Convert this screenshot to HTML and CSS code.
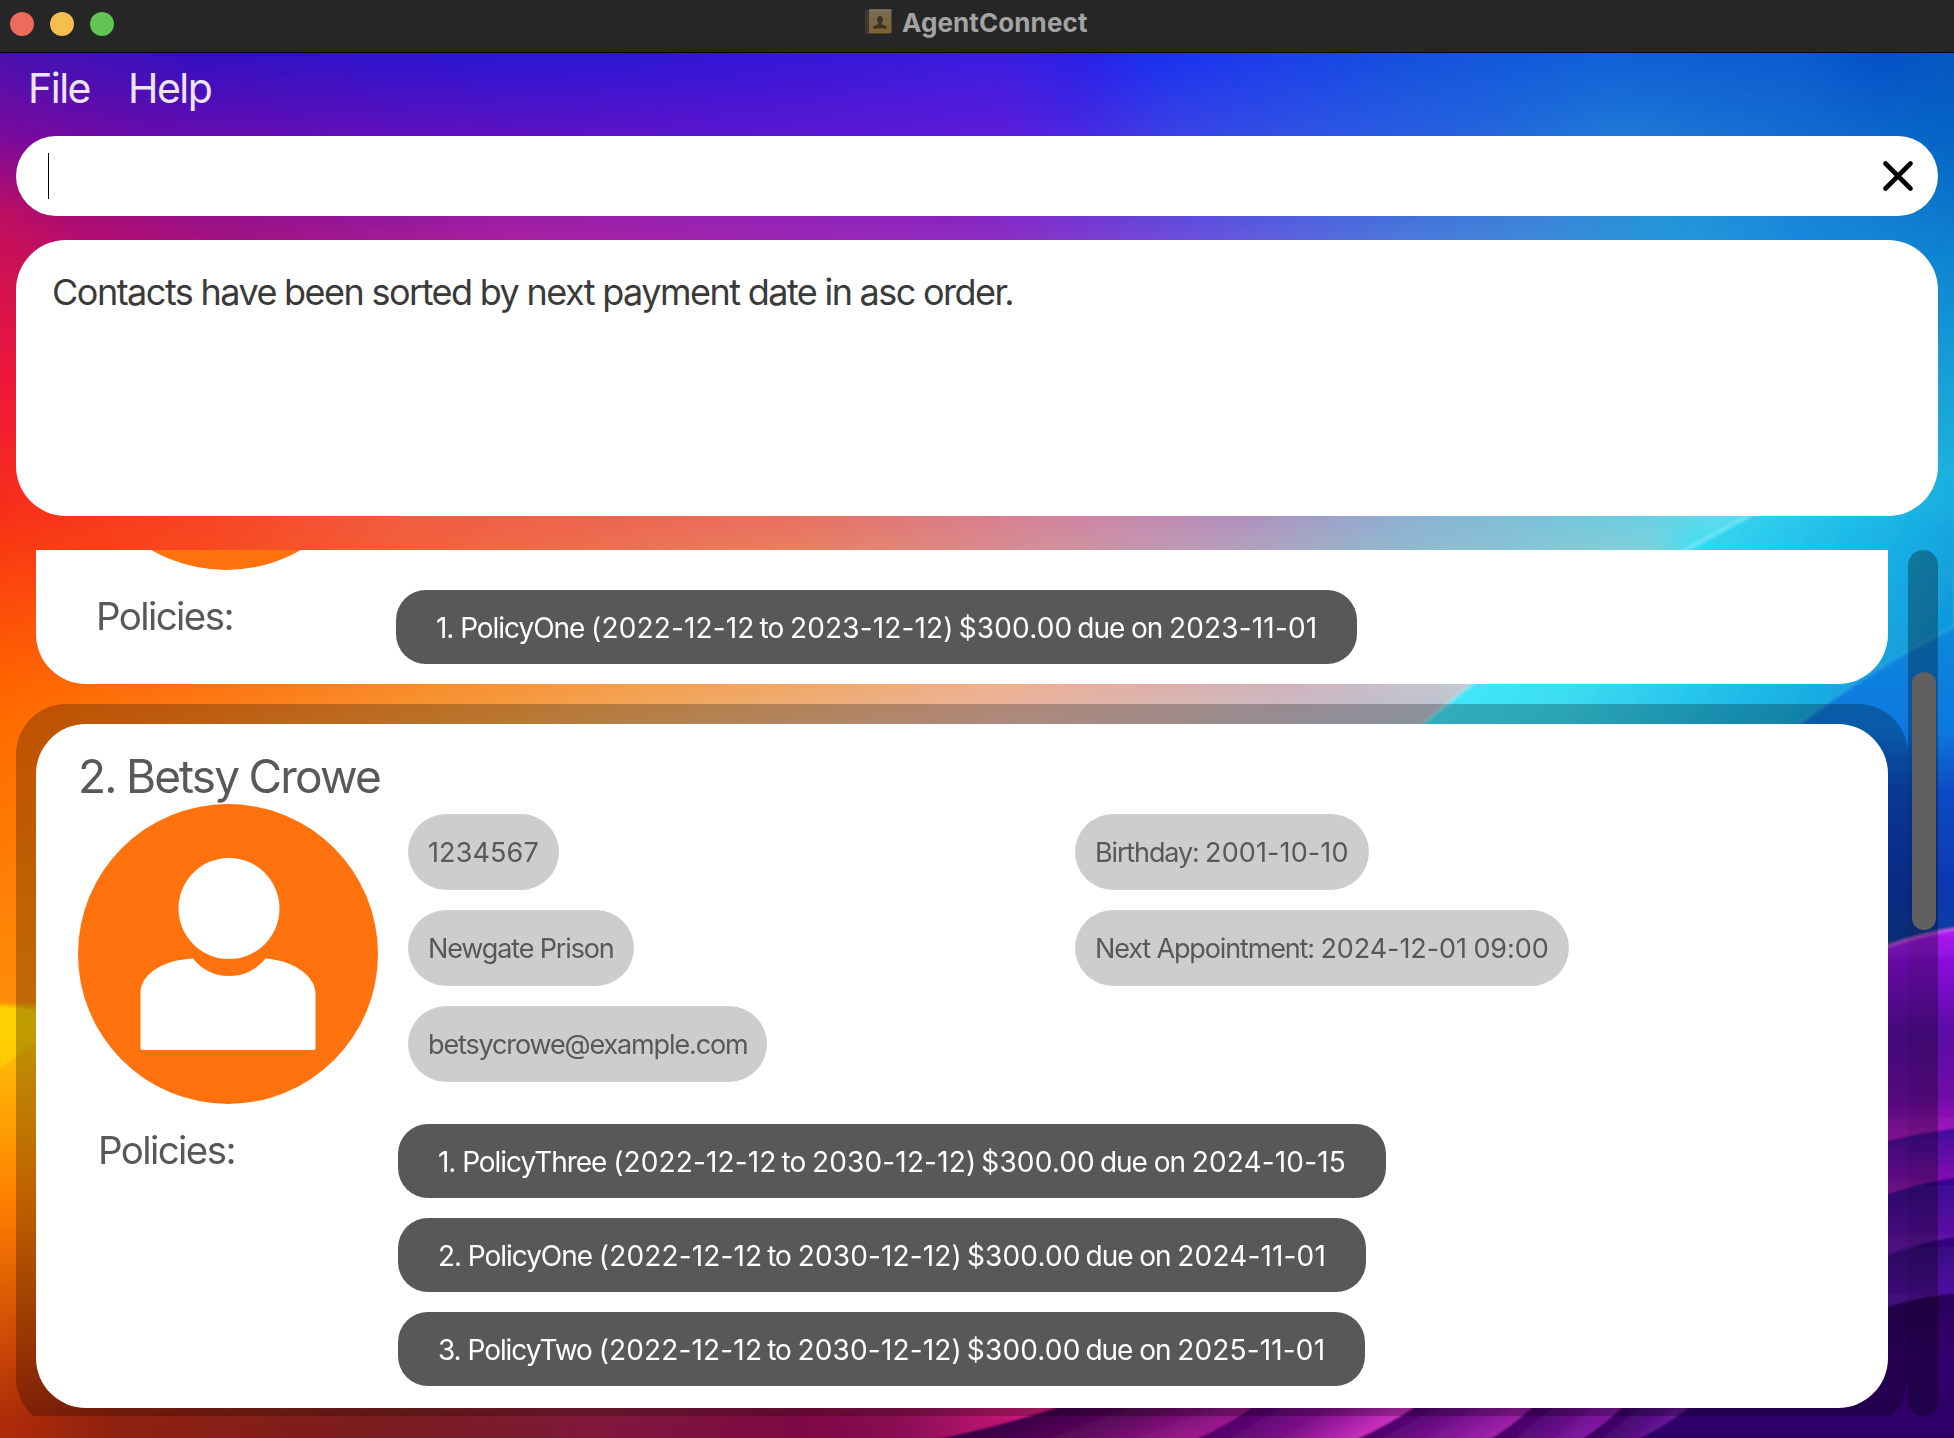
FILE: index.html
```html
<!DOCTYPE html>
<html lang="en">
<head>
<meta charset="utf-8">
<title>AgentConnect</title>
<link rel="stylesheet" href="styles.css">
</head>
<body>
<div class="window">
  <div class="wallpaper" aria-hidden="true">
    <div class="band b1"></div><div class="band b2"></div><div class="band b3"></div><div class="band b4"></div>
    <div class="band b5"></div><div class="band b6"></div><div class="band b7"></div><div class="band b8"></div>
    <div class="band b9"></div><div class="band b10"></div><div class="band b11"></div><div class="band b12"></div>
    <div class="band b13"></div>
    <svg class="waves" viewBox="0 0 1954 1438">
      <defs>
        <linearGradient id="cyan" gradientUnits="userSpaceOnUse" x1="1560" y1="540" x2="1960" y2="790">
          <stop offset="0" stop-color="#42e6f8"/><stop offset=".2" stop-color="#3adcf2"/><stop offset=".5" stop-color="#1fbce8"/><stop offset=".75" stop-color="#129fdc"/><stop offset="1" stop-color="#0c70d4"/>
        </linearGradient>
        <linearGradient id="cyanFade" gradientUnits="userSpaceOnUse" x1="0" y1="440" x2="0" y2="530">
          <stop offset="0" stop-color="#fff" stop-opacity="0"/><stop offset="1" stop-color="#fff"/>
        </linearGradient>
        <mask id="cyanMask"><rect width="1954" height="1438" fill="url(#cyanFade)"/></mask>
        <linearGradient id="blue" gradientUnits="userSpaceOnUse" x1="0" y1="640" x2="0" y2="940">
          <stop offset="0" stop-color="#0c86dc"/><stop offset=".3" stop-color="#1078e0"/><stop offset=".5" stop-color="#0b4cc4"/><stop offset=".8" stop-color="#1038b4"/><stop offset="1" stop-color="#0a3ca0"/>
        </linearGradient>
        <linearGradient id="v1" gradientUnits="userSpaceOnUse" x1="0" y1="930" x2="0" y2="1140">
          <stop offset="0" stop-color="#b01cf0"/><stop offset=".15" stop-color="#8a10dc"/><stop offset=".5" stop-color="#5a08a4"/><stop offset=".8" stop-color="#700ca8"/><stop offset="1" stop-color="#b018c4"/>
        </linearGradient>
        <linearGradient id="v2" gradientUnits="userSpaceOnUse" x1="0" y1="1128" x2="0" y2="1192">
          <stop offset="0" stop-color="#40089c"/><stop offset="1" stop-color="#9414b4"/>
        </linearGradient>
        <linearGradient id="v3" gradientUnits="userSpaceOnUse" x1="0" y1="1178" x2="0" y2="1254">
          <stop offset="0" stop-color="#360590"/><stop offset="1" stop-color="#6c16ac"/>
        </linearGradient>
        <linearGradient id="v4" gradientUnits="userSpaceOnUse" x1="0" y1="1240" x2="0" y2="1306">
          <stop offset="0" stop-color="#34057c"/><stop offset="1" stop-color="#5814a8"/>
        </linearGradient>
        <linearGradient id="v5" gradientUnits="userSpaceOnUse" x1="0" y1="1294" x2="0" y2="1438">
          <stop offset="0" stop-color="#2a0058"/><stop offset=".4" stop-color="#34006c"/><stop offset="1" stop-color="#2c0066"/>
        </linearGradient>
        <linearGradient id="f1" gradientUnits="userSpaceOnUse" x1="1003" y1="1421" x2="1032" y2="1496">
          <stop offset="0" stop-color="#340044"/><stop offset=".5" stop-color="#5c085c"/><stop offset="1" stop-color="#98188c"/>
        </linearGradient>
        <linearGradient id="f2" gradientUnits="userSpaceOnUse" x1="1226" y1="1421" x2="1270" y2="1494">
          <stop offset="0" stop-color="#4c0068"/><stop offset=".5" stop-color="#7c1088"/><stop offset="1" stop-color="#cc30c0"/>
        </linearGradient>
        <linearGradient id="f3" gradientUnits="userSpaceOnUse" x1="1388" y1="1421" x2="1418" y2="1474">
          <stop offset="0" stop-color="#480068"/><stop offset="1" stop-color="#9c20a8"/>
        </linearGradient>
        <linearGradient id="f4" gradientUnits="userSpaceOnUse" x1="1513" y1="1421" x2="1547" y2="1464">
          <stop offset="0" stop-color="#400064"/><stop offset="1" stop-color="#8018a0"/>
        </linearGradient>
        <linearGradient id="f5" gradientUnits="userSpaceOnUse" x1="1604" y1="1421" x2="1628" y2="1451">
          <stop offset="0" stop-color="#34005c"/><stop offset="1" stop-color="#641494"/>
        </linearGradient>
        <filter id="soft" x="-5%" y="-5%" width="110%" height="110%"><feGaussianBlur stdDeviation="1.2"/></filter>
      </defs>
      <g filter="url(#soft)">
        <path mask="url(#cyanMask)" fill="url(#cyan)" d="M1960 420L1752 514Q1590 600 1472 684L1420 726V760H1960Z"/>
        <path d="M1752 514Q1590 600 1472 684L1420 726" fill="none" stroke="#a8f4f4" stroke-width="5" opacity=".35"/>
        <path fill="url(#blue)" d="M1960 624Q1870 668 1800 724V960H1960Z"/>
        <path d="M1960 624Q1870 668 1800 724" fill="none" stroke="#3cb0e8" stroke-width="5" opacity=".3"/>
        <path fill="url(#v1)" d="M1880 949Q1920 934 1960 928V1150H1880Z"/>
        <path d="M1880 949Q1920 934 1960 928" fill="none" stroke="#d060f0" stroke-width="3" opacity=".8"/>
        <path fill="url(#v2)" d="M1880 1143Q1920 1132 1960 1128V1210H1880Z"/>
        <path fill="url(#v3)" d="M1880 1197Q1920 1182 1960 1177V1270H1880Z"/>
        <path fill="url(#v4)" d="M1880 1258Q1920 1242 1960 1236V1320H1880Z"/>
        <path fill="url(#v5)" d="M1800 1360H1880V1309Q1920 1296 1960 1293V1450H1800Z"/>
        <path fill="url(#f1)" d="M1080 1400Q1010 1425 925 1442H1300V1400Z"/>
        <path fill="url(#f2)" d="M1262 1400Q1230 1425 1190 1442H1440V1400Z"/>
        <path fill="url(#f3)" d="M1425 1400Q1390 1425 1350 1442H1560V1400Z"/>
        <path fill="url(#f4)" d="M1540 1400Q1515 1425 1486 1442H1640V1400Z"/>
        <path fill="url(#f5)" d="M1630 1400Q1605 1425 1578 1442H1720V1400Z"/>
        <path fill="url(#v5)" d="M1698 1400Q1670 1425 1632 1442H1900V1400Z"/>
        <path fill="#ffd808" opacity=".6" d="M0 1004Q20 1009 60 1014V1030Q20 1050 0 1070Z"/>
      </g>
    </svg>
  </div>

  <header class="titlebar">
    <div class="lights"><i class="light red"></i><i class="light amber"></i><i class="light green"></i></div>
    <div class="title">
      <svg class="app-icon" viewBox="0 0 27 25">
        <defs><linearGradient id="book" x1="0" y1="0" x2="0" y2="1"><stop offset="0" stop-color="#7a6c56"/><stop offset="1" stop-color="#7c6030"/></linearGradient></defs>
        <rect x="0" y="1" width="5" height="24" fill="#3c3836"/>
        <rect x="4" y=".5" width="22.500" height="24" rx="1" fill="url(#book)"/>
        <rect x="4" y=".5" width="22.500" height="1" fill="#8a8070"/>
        <path fill="#3c3426" d="M15 7c2 0 3.200 1.500 3 3.700-.1 1.500-.7 2.300-1.200 3v1.500c1.500 1 5.200 1 5.200 4.300H8c0-3.300 3.700-3.300 5.200-4.300v-1.500c-.5-.7-1.100-1.500-1.200-3C11.800 8.500 13 7 15 7z"/>
      </svg>
      <span class="title-text">AgentConnect</span>
    </div>
  </header>

  <nav class="menubar"><span>File</span><span>Help</span></nav>

  <div class="command">
    <i class="caret"></i>
    <svg class="clear" viewBox="0 0 32 32"><path d="M3.500 3.500l25 25M28.500 3.500l-25 25" stroke="#000" stroke-width="4.600" stroke-linecap="round"/></svg>
  </div>

  <section class="result">Contacts have been sorted by next payment date in asc order.</section>

  <main class="list">
    <div class="cells">
      <article class="cell first">
        <div class="card">
          <div class="avatar-slot"><div class="avatar-tail"></div></div>
          <div class="policies">
            <span class="label">Policies:</span>
            <div class="policy-list">
              <span class="policy"><b>1. PolicyOne </b>(2022-12-12 <b>to </b>2023-12-12) $300.00 <b>due on </b>2023-11-01</span>
            </div>
          </div>
        </div>
      </article>
      <article class="cell selected">
        <div class="card">
          <h2 class="name">2. Betsy Crowe</h2>
          <div class="details">
            <svg class="avatar" viewBox="0 0 300 300">
              <circle cx="150" cy="150" r="150" fill="#ff720d"/>
              <circle cx="151" cy="104.500" r="50.500" fill="#fff"/>
              <path fill="#fff" d="M115 154.500C85 156 62.500 170 62.500 189V244q0 2 2 2H235.500q2 0 2-2V189C237.500 172 215 156 187.500 154.500C178 166 166 172 151 172S124 166 115 154.500Z"/>
            </svg>
            <div class="column left">
              <span class="chip">1234567</span><span class="chip"><b>Newgate Prison</b></span><span class="chip"><b>betsycrowe@example.com</b></span>
            </div>
            <div class="column">
              <span class="chip"><b>Birthday: </b>2001-10-10</span><span class="chip appointment"><b>Next Appointment: </b>2024-12-01<b> </b>09:00</span>
            </div>
          </div>
          <div class="policies">
            <span class="label">Policies:</span>
            <div class="policy-list">
              <span class="policy"><b>1. PolicyThree </b>(2022-12-12 <b>to </b>2030-12-12) $300.00 <b>due on </b>2024-10-15</span>
              <span class="policy"><b>2. PolicyOne </b>(2022-12-12 <b>to </b>2030-12-12) $300.00 <b>due on </b>2024-11-01</span>
              <span class="policy"><b>3. PolicyTwo </b>(2022-12-12 <b>to </b>2030-12-12) $300.00 <b>due on </b>2025-11-01</span>
            </div>
          </div>
        </div>
      </article>
    </div>
    <div class="scrollbar"><div class="thumb"></div></div>
  </main>
</div>
</body>
</html>
```

FILE: styles.css
```css
* { box-sizing: border-box; }

body {
  margin: 0;
  background: #262626;
  font-family: Inter, "Liberation Sans", sans-serif;
}

.window {
  position: relative;
  width: 1954px;
  height: 1438px;
  overflow: hidden;
  display: flex;
  flex-direction: column;
}

/* Wallpaper: each band fades in over the one above it */
.wallpaper {
  position: absolute;
  inset: 53px 0 0;
  overflow: hidden;
}
.band {
  position: absolute;
  inset: calc(var(--from) - 53px) 0 0;
  -webkit-mask-image: linear-gradient(transparent, #000 var(--fade));
  mask-image: linear-gradient(transparent, #000 var(--fade));
}
.b1 { --from: 53px; --fade: 0px; background: linear-gradient(90deg, #4a12b0, #3410c2 200px, #2a17d4 500px, #3518d8 800px, #3a1de0 1000px, #2a20e6 1080px, #1a30f0 1150px, #1c3cec 1250px, #1450de 1400px, #1060d8 1600px, #0c5cd0 1800px, #0550c8 1880px, #0858c0); }
.b2 { --from: 53px; --fade: 83px; background: linear-gradient(90deg, #7a0a9c, #660cab 150px, #6010bc 400px, #5a14cc 700px, #5e1cd8 1000px, #4a28e0 1080px, #3a44e4 1180px, #2c58e4 1350px, #2468dc 1500px, #1f7ad6 1620px, #146cd0 1800px, #0464c4); }
.b3 { --from: 136px; --fade: 80px; background: linear-gradient(90deg, #c01060, #ac0c72 60px, #981088 200px, #9018a0 400px, #9a1ea6 500px, #9622b2 700px, #8a22c0 950px, #7a30d0 1050px, #5a4ee0 1200px, #4470dc 1400px, #3a84d8 1550px, #2496d8 1660px, #1a86dc 1800px, #0c78cc); }
.b4 { --from: 216px; --fade: 24px; background: linear-gradient(90deg, #c81058, #b40e70 80px, #a01484 250px, #aa20a0 500px, #a024ac 700px, #8e2ec4 1000px, #6a52dc 1200px, #4e78dc 1400px, #3c8ad8 1550px, #2298dc 1680px, #1888dc 1800px, #0c80d0); }
.b5 { --from: 240px; --fade: 140px; background: linear-gradient(90deg, #ec1838, #d04880 800px, #18a0d8); }
.b6 { --from: 380px; --fade: 136px; background: linear-gradient(90deg, #f83018, #f84424 200px, #f25c40 400px, #ee6450 600px, #ea7064 800px, #d88090 1000px, #cc86a8 1100px, #b090c0 1250px, #90b0d0 1400px, #70cadc 1600px, #60dcec 1720px, #28c4ea 1850px, #20b8e0); }
.b7 { --from: 516px; --fade: 34px; background: linear-gradient(90deg, #fa3c10, #f84820 200px, #f26038 400px, #ec7050 600px, #e88060 800px, #d88c90 1000px, #bc9cb8 1200px, #90b8d0 1400px, #80d0dc 1650px, #38e0f4 1700px, #28c8ea 1850px, #14a8e0); }
.b8 { --from: 550px; --fade: 134px; background: linear-gradient(90deg, #ff6400, #fe7210 200px, #f88a28 400px, #f49c48 600px, #f0a868 800px, #eeb090 1000px, #e0b0a8 1150px, #d0b4c0 1300px, #c4c8d0 1450px); }
.b9 { --from: 684px; --fade: 40px; background: linear-gradient(90deg, #ff6c00, #fe8018 200px, #f8a040 500px, #f0b070 700px, #e8b8a8 1000px, #b8c0d0 1400px); }
.b10 { --from: 724px; --fade: 270px; background: linear-gradient(90deg, #ff8c08, #f88800); }
.b11 { --from: 1002px; --fade: 8px; background: linear-gradient(90deg, #ffc808, #ffd008); }
.b12 { --from: 1020px; --fade: 180px; background: linear-gradient(90deg, #ff8000, #ff8c00); }
.b13 { --from: 1200px; --fade: 220px; background: linear-gradient(90deg, #b02c08, #8e2010 120px, #781c20 400px, #80183c 600px, #7c0844 800px, #8a0c54 900px, #d01880 1040px, #7c1088); }
.waves { position: absolute; left: 0; top: -53px; width: 1954px; height: 1438px; }

/* Title bar */
.titlebar {
  position: relative;
  height: 53px;
  flex: none;
  display: grid;
  grid-template-columns: 865px 1fr;
  background: #262626;
  border-bottom: 1px solid #000;
}
.lights { display: flex; gap: 16px; padding: 12px 10px; }
.light { width: 24px; height: 24px; border-radius: 50%; }
.red { background: #ed6a5f; }
.amber { background: #f5bf4f; }
.green { background: #61c554; }
.title { display: flex; gap: 10px; padding-top: 9px; }
.app-icon { width: 27px; height: 25px; }
.title-text { font-size: 26px; font-weight: 700; line-height: 28px; letter-spacing: .1px; color: #a3a3a3; }

/* Menu */
.menubar {
  position: relative;
  flex: none;
  height: 83px;
  padding: 10px 28px;
  display: flex;
  gap: 38px;
  font-size: 41px;
  line-height: 50px;
  letter-spacing: -1.5px;
  color: #ece4f8;
}

/* Command box */
.command {
  position: relative;
  flex: none;
  height: 80px;
  margin: 0 16px 24px;
  padding: 0 24px 0 32px;
  border-radius: 40px;
  background: #fff;
  display: flex;
  align-items: center;
  justify-content: space-between;
}
.caret { width: 1px; height: 46px; background: #000; }
.clear { width: 32px; height: 32px; }

/* Result box */
.result {
  position: relative;
  flex: none;
  height: 276px;
  margin: 0 16px 34px;
  padding: 30px 36px;
  border-radius: 50px;
  background: #fff;
  font-size: 36px;
  line-height: 44px;
  letter-spacing: -1.5px;
  word-spacing: -.5px;
  color: #3a3a3a;
}

/* Contact list */
.list {
  position: relative;
  flex: none;
  height: 866px;
  margin: 0 16px;
  display: flex;
  overflow: hidden;
}
.cells { width: 1892px; }
.cell { padding: 20px; border-radius: 50px; }
.cell.first { height: 154px; padding-top: 0; }
.cell.selected { height: 724px; background: rgba(0, 0, 0, .25); }
.card { background: #fff; border-radius: 50px; color: #585858; }
.first .card { height: 134px; border-radius: 0 0 50px 50px; padding-left: 40px; }
.selected .card { height: 684px; padding-left: 42px; }
.avatar-slot { height: 40px; overflow: hidden; display: flex; align-items: flex-end; }
.avatar-tail { width: 300px; height: 300px; flex: none; margin-bottom: 20px; border-radius: 50%; background: #ff720d; }

.name { margin: 0; height: 80px; padding-top: 23px; font-size: 46px; font-weight: 400; line-height: 58px; letter-spacing: -1.85px; word-spacing: -.8px; }
.details { display: flex; height: 320px; }
.avatar { width: 300px; height: 300px; flex: none; }
.column { display: flex; flex-direction: column; align-items: flex-start; gap: 20px; padding-top: 10px; }
.column.left { margin-left: 30px; width: 667px; }
.chip {
  height: 76px;
  padding: 0 20px;
  border-radius: 38px;
  background: #cdcdcd;
  font-size: 27px;
  line-height: 77px;
  letter-spacing: .12px;
  white-space: pre;
}
/* Words are set tighter than figures */
.chip b { font-weight: 400; letter-spacing: -1.14px; }
.chip.appointment { letter-spacing: -.08px; }
.chip.appointment b { letter-spacing: -1.14px; }

.policies { display: flex; }
.label { width: 320px; padding-left: 20px; font-size: 38.500px; line-height: 52px; letter-spacing: -1.6px; }
.policy-list { display: flex; flex-direction: column; align-items: flex-start; gap: 20px; }
.policy {
  height: 74px;
  padding: 0 40px;
  border-radius: 30px;
  background: #585858;
  color: #fff;
  font-size: 28px;
  line-height: 76px;
  letter-spacing: .15px;
  word-spacing: -3px;
  white-space: pre;
}
.policy b { font-weight: 400; letter-spacing: -1.05px; word-spacing: 0; }

.scrollbar {
  width: 30px;
  height: 866px;
  padding: 122px 2px 0 4px;
  border-radius: 15px;
  background: rgba(0, 0, 0, .3);
}
.thumb { height: 258px; border-radius: 12px; background: #606060; }
```
